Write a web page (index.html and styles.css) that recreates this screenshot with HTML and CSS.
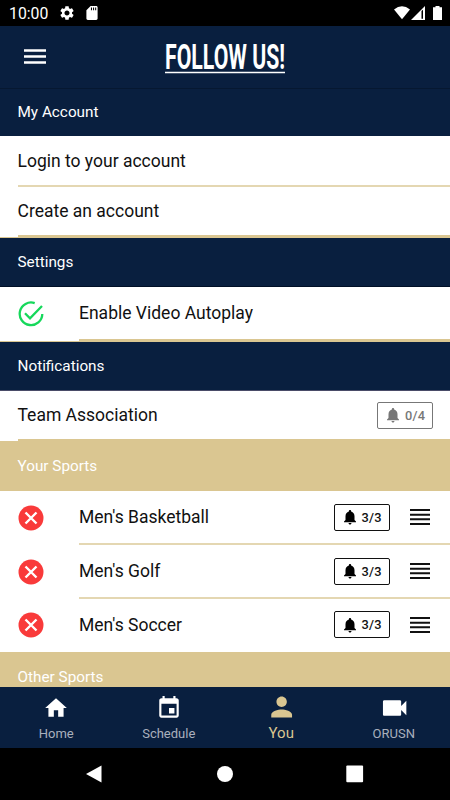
FILE: index.html
```html
<!DOCTYPE html>
<html lang="en">
<head>
  <meta charset="UTF-8">
  <title>Follow Us</title>
  <link rel="stylesheet" href="styles.css">
</head>
<body>

<svg class="defs" width="0" height="0">
  <symbol id="bell" viewBox="0 0 24 24"><path d="M12 22c1.100 0 2-.9 2-2h-4c0 1.100.9 2 2 2zm6-6v-5c0-3.070-1.640-5.640-4.500-6.320V4c0-.83-.67-1.500-1.500-1.500s-1.500.67-1.500 1.500v.68C7.630 5.360 6 7.920 6 11v5l-2 2v1h16v-1l-2-2z"/></symbol>
  <symbol id="remove" viewBox="0 0 26 26"><circle cx="13" cy="13" r="12.500" fill="#f93a3a"/><path d="M7.500 7.500l11 11M18.500 7.500l-11 11" stroke="#fff" stroke-width="2.400"/></symbol>
  <symbol id="drag" viewBox="0 0 20 16"><path d="M0 1h20M0 5.700h20M0 10.300h20M0 15h20" stroke="#111" stroke-width="1.900"/></symbol>
</svg>

<div class="app">
  <div class="status">
    <span class="time">10:00</span>
    <svg class="gear" viewBox="2 2 20 20"><path d="M19.140 12.940c.04-.3.060-.61.060-.94 0-.32-.02-.64-.07-.94l2.030-1.580c.18-.14.230-.41.120-.61l-1.920-3.320c-.12-.22-.37-.29-.59-.22l-2.390.96c-.5-.38-1.030-.7-1.620-.94l-.36-2.540c-.04-.24-.24-.41-.48-.41h-3.840c-.24 0-.43.170-.47.410l-.36 2.540c-.59.240-1.130.570-1.620.940l-2.390-.96c-.22-.08-.47 0-.59.220L2.740 8.870c-.12.210-.08.470.120.610l2.030 1.580c-.05.300-.09.630-.09.940s.020.640.070.940l-2.030 1.580c-.18.140-.23.410-.12.610l1.920 3.320c.12.220.37.290.59.220l2.390-.96c.5.380 1.030.700 1.620.940l.36 2.540c.05.240.240.410.480.410h3.840c.24 0 .44-.17.470-.41l.36-2.540c.59-.24 1.130-.56 1.620-.94l2.390.960c.22.080.470 0 .59-.22l1.920-3.320c.12-.22.070-.47-.12-.61l-2.010-1.580zM12 15.600c-1.980 0-3.600-1.620-3.600-3.600s1.620-3.600 3.600-3.600 3.600 1.620 3.600 3.600-1.620 3.600-3.600 3.600z"/></svg>
    <svg class="card" viewBox="4 2 16 20"><path d="M18 2h-8L4 8v12c0 1.100.9 2 2 2h12c1.100 0 2-.9 2-2V4c0-1.100-.9-2-2-2zm-6 6h-1.500V4H12v4zm3 0h-1.500V4H15v4zm3 0h-1.500V4H18v4z"/></svg>
    <svg class="signals" viewBox="0 0 50 16"><path d="M1 4.500Q9-2 17 4.500L9 14.200z"/><path d="M18 15L32 1v14z"/><path d="M28.500 6v7.700H30V4.800z" fill="#000"/><path d="M40 2.200h2.500V1h4v1.200H49V15h-9z"/></svg>
  </div>

  <header class="header">
    <svg class="menu" viewBox="0 0 22 15"><path d="M0 1.500h22M0 7.500h22M0 13.500h22" stroke="#fff" stroke-width="2.300"/></svg>
    <svg class="logo" viewBox="0 0 120 34"><text x="0" y="27.500" textLength="120" lengthAdjust="spacingAndGlyphs">FOLLOW US!</text><path d="M0 31.500h120" stroke="#fff" stroke-width="1.300"/></svg>
  </header>

  <main class="list">
    <h2 class="section first">My Account</h2>
    <div class="row login"><span>Login to your account</span></div>
    <div class="row create"><span>Create an account</span></div>
    <h2 class="section settings">Settings</h2>
    <div class="row inset video">
      <svg class="state" viewBox="0 0 26 26"><path d="M16.700 2.100A11.300 11.300 0 1 0 24.300 13M7 12.300l5 5L24 5" fill="none" stroke="#16d85b" stroke-width="2.300"/></svg>
      <span>Enable Video Autoplay</span>
    </div>
    <h2 class="section notifications">Notifications</h2>
    <div class="row team">
      <span>Team Association</span>
      <div class="count off"><svg><use href="#bell"/></svg>0/4</div>
    </div>
    <h2 class="section gold">Your Sports</h2>
    <div class="row inset sport">
      <svg class="state"><use href="#remove"/></svg>
      <span>Men's Basketball</span>
      <div class="count"><svg><use href="#bell"/></svg>3/3</div>
      <svg class="drag"><use href="#drag"/></svg>
    </div>
    <div class="row inset sport">
      <svg class="state"><use href="#remove"/></svg>
      <span>Men's Golf</span>
      <div class="count"><svg><use href="#bell"/></svg>3/3</div>
      <svg class="drag"><use href="#drag"/></svg>
    </div>
    <div class="row inset sport last">
      <svg class="state"><use href="#remove"/></svg>
      <span>Men's Soccer</span>
      <div class="count"><svg><use href="#bell"/></svg>3/3</div>
      <svg class="drag"><use href="#drag"/></svg>
    </div>
    <h2 class="section gold">Other Sports</h2>
  </main>

  <nav class="tabs">
    <div class="tab"><svg viewBox="0 0 24 24"><path d="M10 20v-6h4v6h5v-8h3L12 3 2 12h3v8z"/></svg>Home</div>
    <div class="tab"><svg viewBox="0 0 24 24"><path d="M17 12h-5v5h5v-5zM16 1v2H8V1H6v2H5c-1.110 0-1.990.9-1.990 2L3 19c0 1.100.89 2 2 2h14c1.100 0 2-.9 2-2V5c0-1.100-.9-2-2-2h-1V1h-2zm3 18H5V8h14v11z"/></svg>Schedule</div>
    <div class="tab active"><svg viewBox="1.500 2 20 20"><path d="M12 12c2.210 0 4-1.790 4-4s-1.790-4-4-4-4 1.790-4 4 1.790 4 4 4zm0 2c-2.670 0-8 1.340-8 4v2h16v-2c0-2.660-5.330-4-8-4z"/></svg>You</div>
    <div class="tab"><svg viewBox="1.500 2 20 20"><path d="M17 10.500V7c0-.55-.45-1-1-1H4c-.55 0-1 .45-1 1v10c0 .55.450 1 1 1h12c.55 0 1-.45 1-1v-3.500l4 4v-11l-4 4z"/></svg>ORUSN</div>
  </nav>

  <div class="system">
    <svg viewBox="0 0 18 18"><path d="M0 9L15.500 .5v17z"/></svg>
    <svg viewBox="0 0 18 18"><circle cx="9" cy="9" r="8"/></svg>
    <svg viewBox="0 0 18 18"><rect x=".3" y=".5" width="16.800" height="16.800" rx="1"/></svg>
  </div>
</div>

</body>
</html>
```
FILE: styles.css
```css
* {
  box-sizing: border-box;
}

body {
  margin: 0;
  font-family: Roboto, sans-serif;
  background: #000;
  color: #111;
}

svg {
  display: block;
  flex: none;
}

.defs {
  display: none;
}

.app {
  width: 450px;
  height: 800px;
  display: flex;
  flex-direction: column;
  overflow: hidden;
}

.status {
  height: 26px;
  padding: 0 7px 0 9px;
  display: flex;
  align-items: center;
  background: #000;
  color: #fff;
  fill: #fff;
}

.time { font-size: 15.800px; width: 51px; padding-top: 1px; }
.gear { width: 14px; height: 14px; margin-right: 12px; }
.card { width: 12px; height: 14px; }
.signals { width: 50px; height: 16px; margin-left: auto; }

.header {
  height: 62px;
  display: flex;
  align-items: center;
  padding-left: 24px;
  background: #091f3f;
}

.menu { width: 22px; height: 15px; margin-bottom: 1px; }
.logo { width: 120px; height: 34px; margin: 2px 0 0 119px; overflow: visible; }
.logo text { font-size: 35px; font-weight: 700; fill: #fff; }

.list {
  height: 599px;
  overflow: hidden;
  background: #fff;
}

.section {
  margin: 0;
  height: 49px;
  padding-left: 17.500px;
  line-height: 49px;
  font-size: 15.300px;
  font-weight: 400;
  background: #091f3f;
  color: #fff;
}

.first { height: 48px; line-height: 46px; border-top: 1px solid #061831; }
.settings { border-bottom: 1px solid #000f26; }
.notifications { border-bottom: 1px solid #4a4c68; }
.gold { height: 50px; line-height: 51px; background: #dac691; }

.row {
  display: flex;
  align-items: center;
  height: 50px;
  padding: 0 17px 2px 17.500px;
  font-size: 17.500px;
  background: linear-gradient(#dac691, #dac691) 18px 100% / 100% 2px no-repeat #fff;
}

.row span {
  flex: 1;
}

.inset { background-position: 79px 100%; }
.login { height: 51px; background-image: linear-gradient(#e4d7b2, #e4d7b2); }
.create { height: 51px; border-bottom: 1px solid #dac691; }
.video { height: 55px; border-bottom: 1px solid #dac691; }
.team { height: 50px; }
.sport { height: 54px; padding-right: 20px; background-image: linear-gradient(#e4d7b2, #e4d7b2); }
.last { height: 53px; background: #fff; }

.state { width: 26px; height: 26px; margin: 1px 35.500px 0 0; }

.count {
  width: 56px;
  height: 27px;
  display: flex;
  align-items: center;
  padding-left: 6px;
  gap: 3px;
  border: 1px solid #111;
  border-radius: 2px;
  font-size: 12.800px;
  font-weight: 500;
  letter-spacing: .2px;
}

.count svg { width: 18px; height: 18px; }
.off { color: #777; fill: #777; border-color: #777; }
.drag { width: 20px; height: 16px; margin-left: 20.500px; }

.tabs {
  height: 61px;
  display: flex;
  background: #091f3f;
  fill: #fff;
}

.tab {
  flex: 1;
  display: flex;
  flex-direction: column;
  align-items: center;
  padding-top: 8px;
  font-size: 13px;
  line-height: 18px;
  color: #a9b0bd;
}

.tab svg { width: 26px; height: 26px; margin-bottom: 4px; }
.active { padding-top: 7px; font-size: 15px; color: #dac691; fill: #dac691; }

.system {
  flex: 1;
  display: flex;
  justify-content: center;
  align-items: center;
  gap: 112px;
  fill: #fff;
}

.system svg { width: 18px; height: 18px; }
```
